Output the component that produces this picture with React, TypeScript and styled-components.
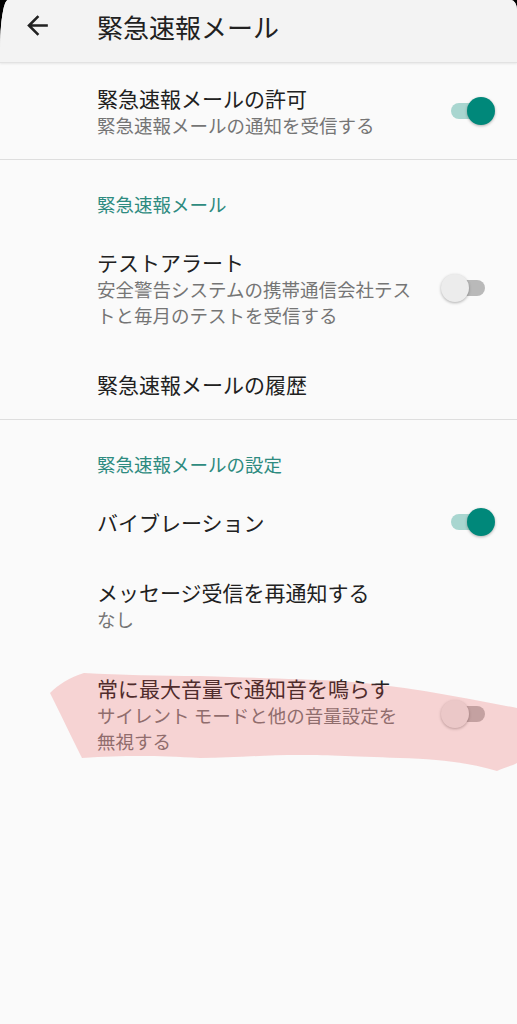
import React from "react";
import styled, { createGlobalStyle } from "styled-components";

type Pref = {
  title: string;
  summary?: string[];
  toggle?: boolean;
};

type Section = {
  category?: string;
  items: Pref[];
};

const sections: Section[] = [
  {
    items: [
      { title: "緊急速報メールの許可", summary: ["緊急速報メールの通知を受信する"], toggle: true },
    ],
  },
  {
    category: "緊急速報メール",
    items: [
      {
        title: "テストアラート",
        summary: ["安全警告システムの携帯通信会社テス", "トと毎月のテストを受信する"],
        toggle: false,
      },
      { title: "緊急速報メールの履歴" },
    ],
  },
  {
    category: "緊急速報メールの設定",
    items: [
      { title: "バイブレーション", toggle: true },
      { title: "メッセージ受信を再通知する", summary: ["なし"] },
      {
        title: "常に最大音量で通知音を鳴らす",
        summary: ["サイレント モードと他の音量設定を", "無視する"],
        toggle: false,
      },
    ],
  },
];

const App: React.FC = () => {
  return (
    <>
      <GlobalStyle />
      <Screen>
        <AppBar>
          <BackButton aria-label="戻る">
            <svg width="31" height="31" viewBox="0 0 24 24">
              <path
                fill="#212121"
                d="M20 11H7.83l5.59-5.59L12 4l-8 8 8 8 1.41-1.41L7.83 13H20v-2z"
              />
            </svg>
          </BackButton>
          <AppTitle>緊急速報メール</AppTitle>
        </AppBar>

        <List>
          {sections.map((section, si) => (
            <Group key={si} $last={si === sections.length - 1}>
              {section.category && <Category>{section.category}</Category>}
              {section.items.map((item) => (
                <Row key={item.title}>
                  <Texts>
                    <Title>{item.title}</Title>
                    {item.summary && (
                      <Summary>
                        {item.summary.map((line, i) => (
                          <React.Fragment key={i}>
                            {i > 0 && <br />}
                            {line}
                          </React.Fragment>
                        ))}
                      </Summary>
                    )}
                  </Texts>
                  {item.toggle !== undefined && (
                    <Switch $on={item.toggle}>
                      <Track $on={item.toggle} />
                      <Thumb $on={item.toggle} />
                    </Switch>
                  )}
                </Row>
              ))}
            </Group>
          ))}

          {/* hand-drawn marker stroke over the last preference */}
          <Marker viewBox="0 0 517 110" preserveAspectRatio="none">
            <path
              d="M50 30 C58 22 70 14 84 10 C120 12 160 13 200 13 C260 15 300 16 340 18 C400 22 460 34 517 45 L517 100 C512 103 502 105 497 108 C470 100 440 96 400 95 C350 93 320 92 300 92 C260 92 230 95 200 95 C160 93 130 92 82 95 C72 75 60 50 50 30 Z"
              fill="rgba(235, 80, 80, 0.23)"
            />
          </Marker>
        </List>
      </Screen>
    </>
  );
};

export default App;

const GlobalStyle = createGlobalStyle`
  html, body {
    margin: 0;
    padding: 0;
    background: #000;
  }
  body {
    font-family: "Noto Sans CJK JP", "Noto Sans", Roboto, sans-serif;
    -webkit-font-smoothing: antialiased;
  }
`;

const Screen = styled.div`
  min-height: 1024px;
  background: #fafafa;
  border-top-left-radius: 8px 50px;
  border-top-right-radius: 6px 10px;
  overflow: hidden;
`;

const AppBar = styled.header`
  height: 62px;
  display: flex;
  align-items: flex-start;
  background: #f3f3f3;
  border-bottom: 1px solid #e2e2e2;
  box-shadow: 0 1px 2px rgba(0, 0, 0, 0.08);
  position: relative;
  z-index: 1;
`;

const BackButton = styled.div`
  width: 31px;
  height: 31px;
  margin: 10px 0 0 22px;
  display: flex;
`;

const AppTitle = styled.h1`
  margin: 11px 0 0 44px;
  font-size: 26px;
  line-height: 32px;
  font-weight: 400;
  color: #212121;
`;

const List = styled.main`
  position: relative;
`;

const Group = styled.section<{ $last: boolean }>`
  border-bottom: ${(p) => (p.$last ? "none" : "1.5px solid #dedede")};
`;

const Category = styled.div`
  padding: 32px 22px 11px 97px;
  font-size: 18.5px;
  line-height: 24px;
  color: #2e8b80;
`;

const Row = styled.div`
  display: flex;
  align-items: center;
  padding: 21px 22px 21px 97px;
`;

const Texts = styled.div`
  flex: 1;
  min-width: 0;
`;

const Title = styled.div`
  font-size: 21px;
  line-height: 28px;
  color: #212121;
`;

const Summary = styled.div`
  font-size: 18.5px;
  line-height: 26px;
  color: #757575;
`;

const Switch = styled.div<{ $on: boolean }>`
  position: relative;
  width: 54px;
  height: 28px;
  flex-shrink: 0;
`;

const Track = styled.div<{ $on: boolean }>`
  position: absolute;
  left: 10px;
  top: 6px;
  width: 34px;
  height: 16px;
  border-radius: 8px;
  background: ${(p) => (p.$on ? "#a9d6d0" : "#b9b9b9")};
`;

const Thumb = styled.div<{ $on: boolean }>`
  position: absolute;
  top: 0;
  left: ${(p) => (p.$on ? "26px" : "0")};
  width: 28px;
  height: 28px;
  border-radius: 50%;
  background: ${(p) => (p.$on ? "#00887a" : "#ececec")};
  box-shadow: 0 1px 3px rgba(0, 0, 0, 0.3);
`;

const Marker = styled.svg`
  position: absolute;
  left: 0;
  top: 600px;
  width: 517px;
  height: 110px;
  pointer-events: none;
`;
